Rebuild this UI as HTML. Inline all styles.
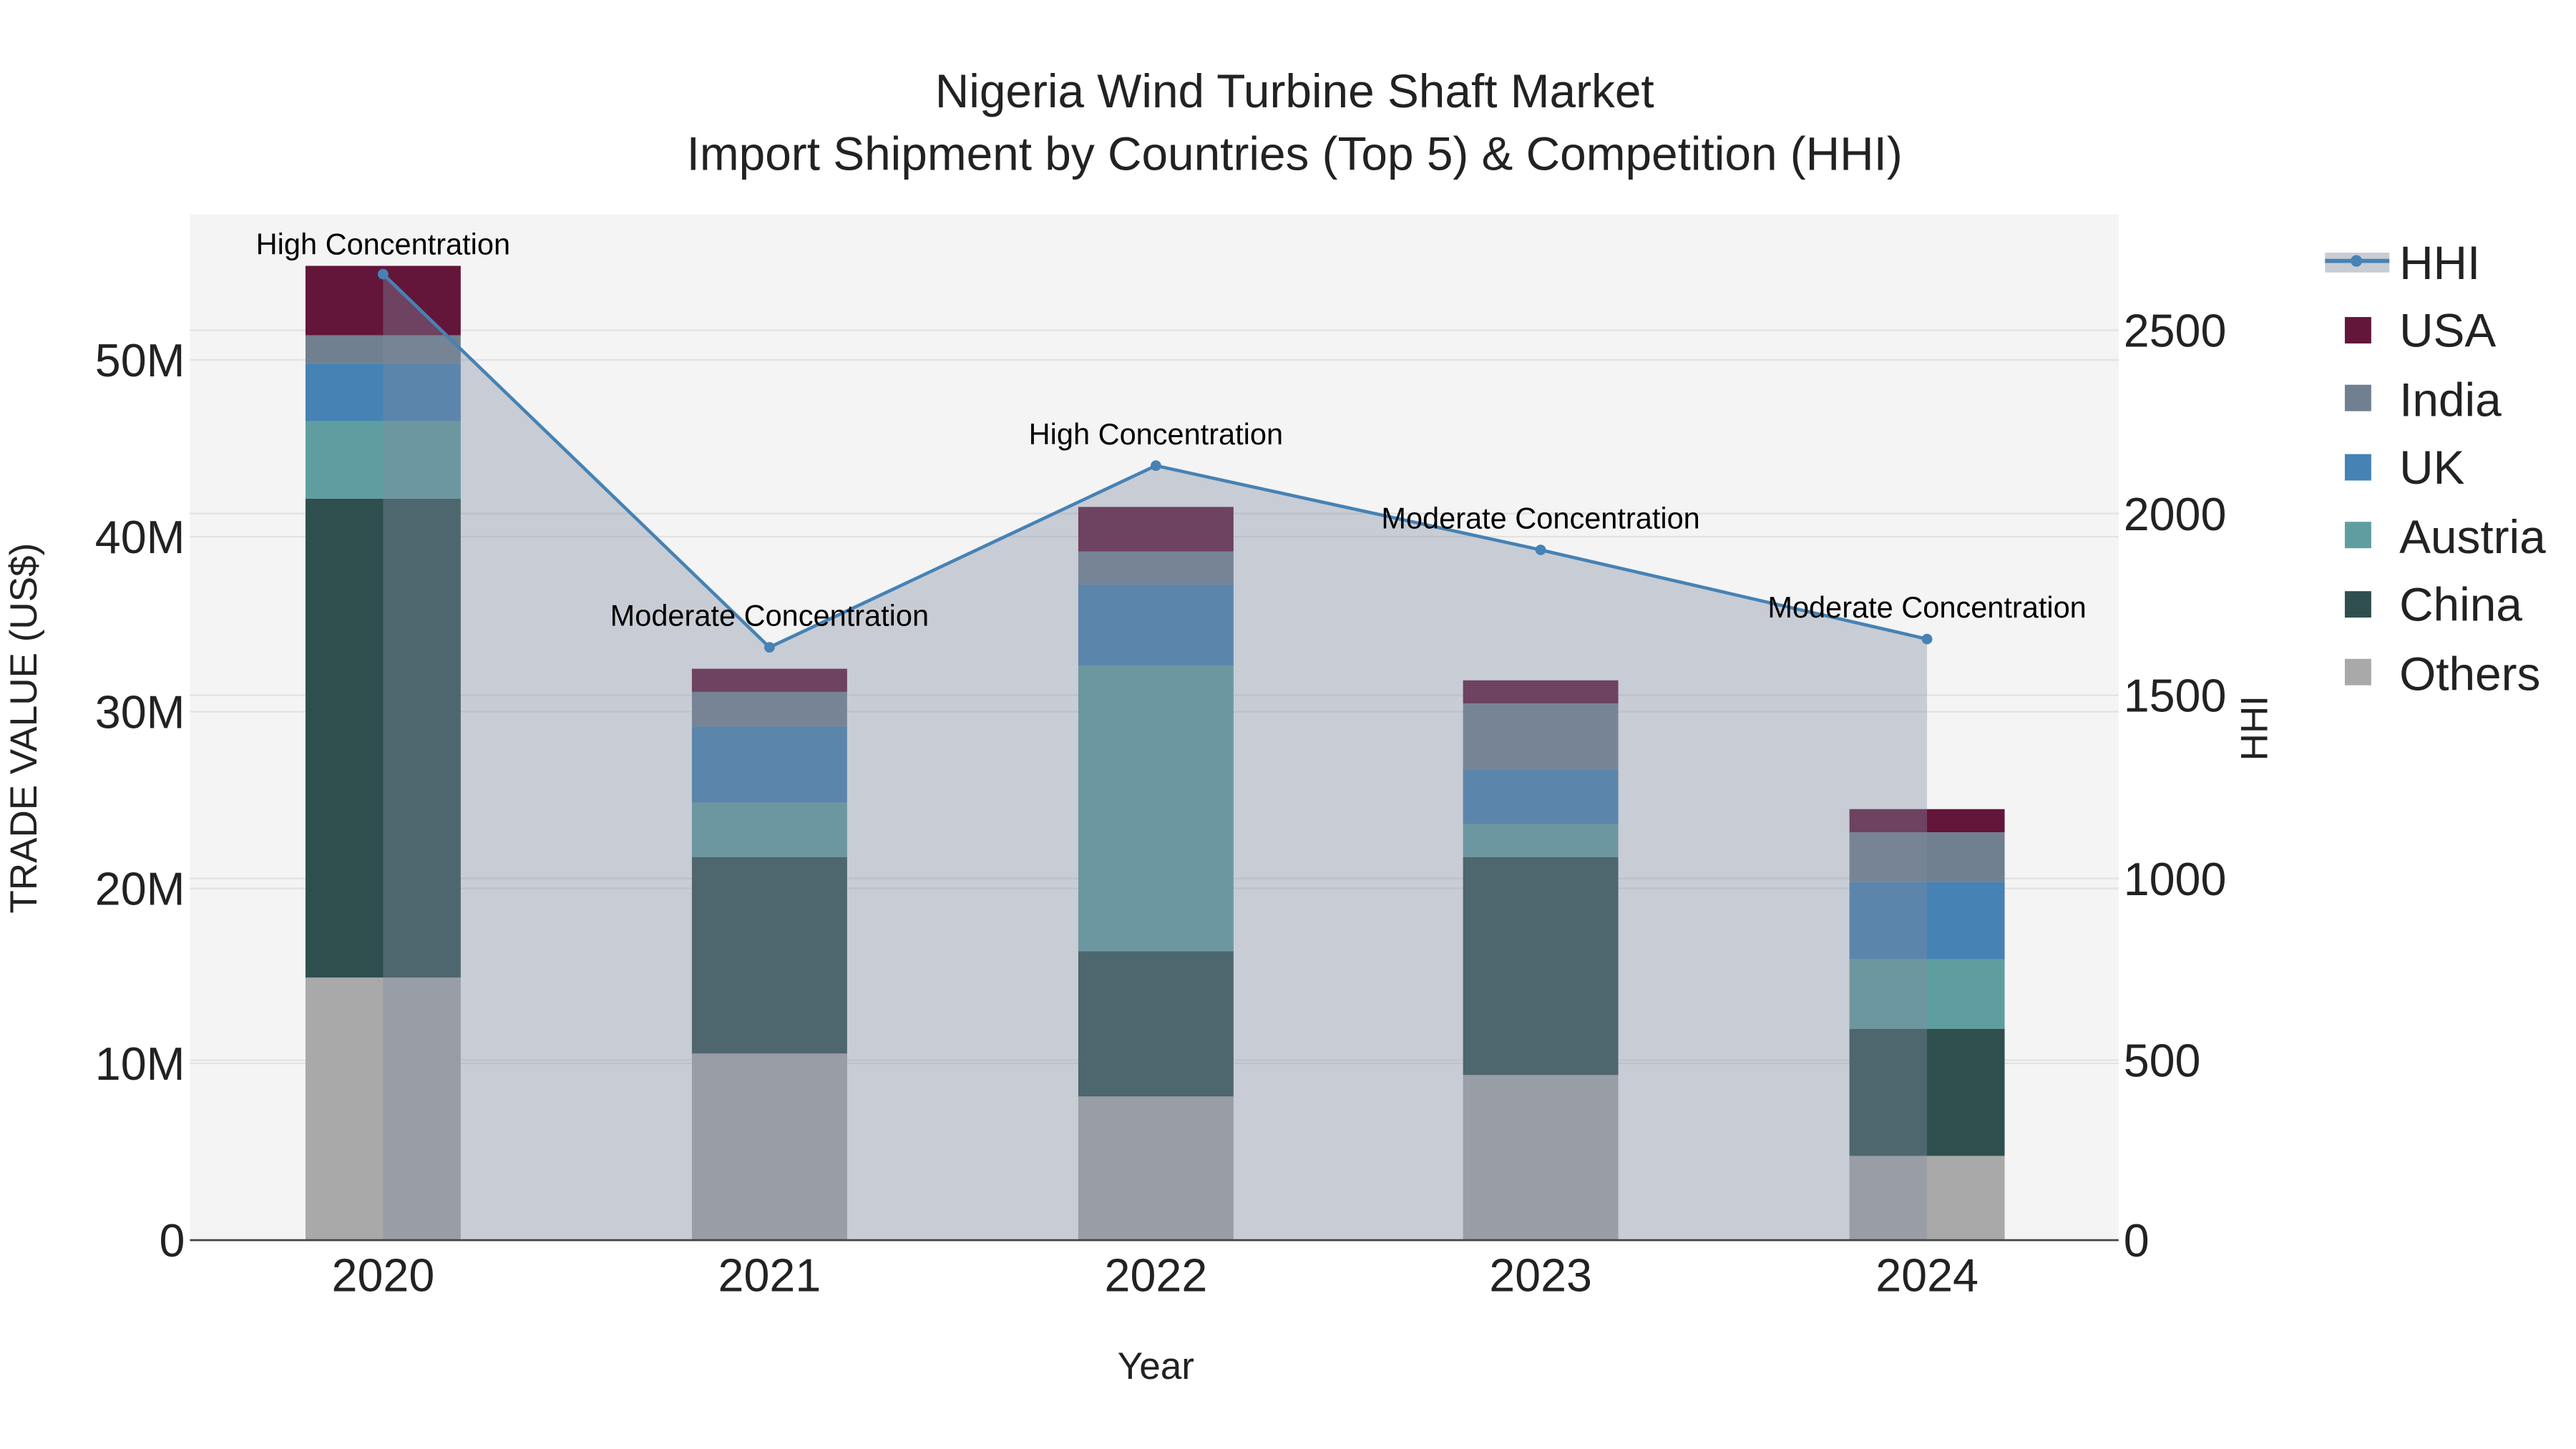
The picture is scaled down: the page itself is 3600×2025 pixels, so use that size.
<!DOCTYPE html>
<html><head><meta charset="utf-8"><style>html,body{margin:0;padding:0;background:#fff}svg{display:block}</style></head><body>
<svg width="3600" height="2025" viewBox="0 0 1560 877.5" xmlns="http://www.w3.org/2000/svg" font-family="Liberation Sans, sans-serif">
<rect width="1560" height="877.5" fill="#fff"/>
<rect x="115" y="130" width="1168" height="621" fill="#f4f4f4"/>
<g stroke="#e2e2e2" stroke-width="1">
<line x1="115" x2="1283" y1="644" y2="644"/><line x1="115" x2="1283" y1="538" y2="538"/><line x1="115" x2="1283" y1="431" y2="431"/><line x1="115" x2="1283" y1="325" y2="325"/><line x1="115" x2="1283" y1="218" y2="218"/>
<line x1="115" x2="1283" y1="642" y2="642"/><line x1="115" x2="1283" y1="532" y2="532"/><line x1="115" x2="1283" y1="421" y2="421"/><line x1="115" x2="1283" y1="311" y2="311"/><line x1="115" x2="1283" y1="200" y2="200"/>
</g>
<g>
<rect x="185" y="592" width="94" height="159" fill="#a9a9a9"/><rect x="185" y="302" width="94" height="290" fill="#2f4f4f"/><rect x="185" y="255" width="94" height="47" fill="#5f9ea0"/><rect x="185" y="220" width="94" height="35" fill="#4682b4"/><rect x="185" y="203" width="94" height="17" fill="#708090"/><rect x="185" y="161" width="94" height="42" fill="#63163a"/>
<rect x="419" y="638" width="94" height="113" fill="#a9a9a9"/><rect x="419" y="519" width="94" height="119" fill="#2f4f4f"/><rect x="419" y="486" width="94" height="33" fill="#5f9ea0"/><rect x="419" y="440" width="94" height="46" fill="#4682b4"/><rect x="419" y="419" width="94" height="21" fill="#708090"/><rect x="419" y="405" width="94" height="14" fill="#63163a"/>
<rect x="653" y="664" width="94" height="87" fill="#a9a9a9"/><rect x="653" y="576" width="94" height="88" fill="#2f4f4f"/><rect x="653" y="403" width="94" height="173" fill="#5f9ea0"/><rect x="653" y="354" width="94" height="49" fill="#4682b4"/><rect x="653" y="334" width="94" height="20" fill="#708090"/><rect x="653" y="307" width="94" height="27" fill="#63163a"/>
<rect x="886" y="651" width="94" height="100" fill="#a9a9a9"/><rect x="886" y="519" width="94" height="132" fill="#2f4f4f"/><rect x="886" y="499" width="94" height="20" fill="#5f9ea0"/><rect x="886" y="466" width="94" height="33" fill="#4682b4"/><rect x="886" y="426" width="94" height="40" fill="#708090"/><rect x="886" y="412" width="94" height="14" fill="#63163a"/>
<rect x="1120" y="700" width="94" height="51" fill="#a9a9a9"/><rect x="1120" y="623" width="94" height="77" fill="#2f4f4f"/><rect x="1120" y="581" width="94" height="42" fill="#5f9ea0"/><rect x="1120" y="534" width="94" height="47" fill="#4682b4"/><rect x="1120" y="504" width="94" height="30" fill="#708090"/><rect x="1120" y="490" width="94" height="14" fill="#63163a"/>
</g>
<polygon points="232,751 232,166 466,392 700,282 933,333 1167,387 1167,751" fill="rgb(128,139,160)" fill-opacity="0.38"/>
<polyline points="232,166 466,392 700,282 933,333 1167,387" fill="none" stroke="#4682b4" stroke-width="2"/>
<g fill="#4682b4"><circle cx="232" cy="166" r="3.2"/><circle cx="466" cy="392" r="3.2"/><circle cx="700" cy="282" r="3.2"/><circle cx="933" cy="333" r="3.2"/><circle cx="1167" cy="387" r="3.2"/></g>
<line x1="115" x2="1283" y1="751" y2="751" stroke="#444" stroke-width="1.2"/>
<g font-size="18" fill="#000" text-anchor="middle">
<text x="232" y="154">High Concentration</text><text x="466" y="379">Moderate Concentration</text><text x="700" y="269">High Concentration</text><text x="933" y="320">Moderate Concentration</text><text x="1167" y="374">Moderate Concentration</text>
</g>
<g font-size="28.5" fill="#222" text-anchor="middle"><text x="784" y="65">Nigeria Wind Turbine Shaft Market</text><text x="784" y="103">Import Shipment by Countries (Top 5) &amp; Competition (HHI)</text></g>
<g font-size="28" fill="#222" text-anchor="end"><text x="112" y="761">0</text><text x="112" y="654">10M</text><text x="112" y="548">20M</text><text x="112" y="441">30M</text><text x="112" y="335">40M</text><text x="112" y="228">50M</text></g>
<g font-size="28" fill="#222"><text x="1286" y="761">0</text><text x="1286" y="652">500</text><text x="1286" y="542">1000</text><text x="1286" y="431">1500</text><text x="1286" y="321">2000</text><text x="1286" y="210">2500</text></g>
<g font-size="28" fill="#222" text-anchor="middle"><text x="232" y="782">2020</text><text x="466" y="782">2021</text><text x="700" y="782">2022</text><text x="933" y="782">2023</text><text x="1167" y="782">2024</text></g>
<text x="700" y="835" font-size="23" fill="#222" text-anchor="middle">Year</text>
<text transform="translate(22,441) rotate(-90)" font-size="23" fill="#222" text-anchor="middle">TRADE VALUE (US$)</text>
<text transform="translate(1373,441) rotate(-90)" font-size="23" fill="#222" text-anchor="middle">HHI</text>
<rect x="1408" y="153" width="39" height="12" fill="#c8ccd4"/>
<line x1="1408" x2="1447" y1="158" y2="158" stroke="#4682b4" stroke-width="2.5"/><circle cx="1427" cy="158" r="3.5" fill="#4682b4"/>
<rect x="1420" y="192" width="16" height="16" fill="#63163a"/><rect x="1420" y="233" width="16" height="16" fill="#708090"/><rect x="1420" y="275" width="16" height="16" fill="#4682b4"/><rect x="1420" y="316" width="16" height="16" fill="#5f9ea0"/><rect x="1420" y="358" width="16" height="16" fill="#2f4f4f"/><rect x="1420" y="399" width="16" height="16" fill="#a9a9a9"/>
<g font-size="28.5" fill="#222"><text x="1453" y="169">HHI</text><text x="1453" y="210">USA</text><text x="1453" y="252">India</text><text x="1453" y="293">UK</text><text x="1453" y="335">Austria</text><text x="1453" y="376">China</text><text x="1453" y="418">Others</text></g>
</svg>
</body></html>
